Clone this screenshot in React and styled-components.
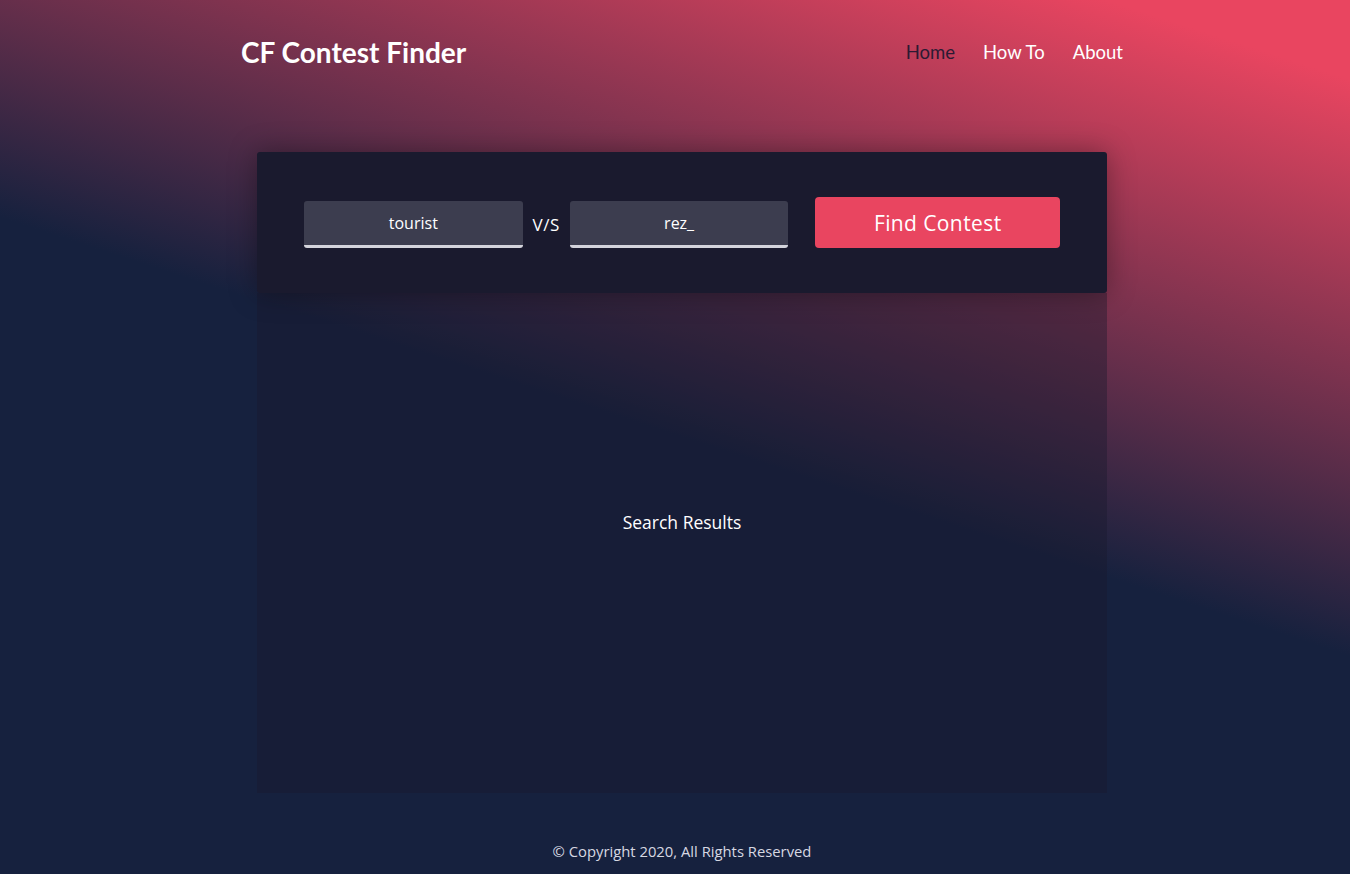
import React from 'react';
import styled, { createGlobalStyle } from 'styled-components';

const GlobalStyle = createGlobalStyle`
    html, body {
        margin: 0;
        padding: 0;
    }
    body {
        font-family: "Open Sans", "Liberation Sans", sans-serif;
        background: #16213e;
    }
`

const Page = styled.div`
    min-height: 874px;
    box-sizing: border-box;
    padding-left: 14px;
    display: flex;
    flex-direction: column;
    align-items: center;
    background: linear-gradient(18deg, #16213e 50%, #e94560 94%);
`

const Header = styled.header`
    width: 882px;
    height: 104px;
    display: flex;
    justify-content: space-between;
    align-items: center;
`

const Brand = styled.h1`
    margin: 0;
    font-family: Lato, "Open Sans", sans-serif;
    font-size: 28px;
    font-weight: 700;
    color: #fff;
`

const Nav = styled.nav`
    display: flex;
    gap: 28px;
`

const NavLink = styled.a`
    font-family: Lato, "Open Sans", sans-serif;
    font-size: 18.5px;
    color: ${p => (p.$active ? '#2b1a33' : '#fff')};
    text-decoration: none;
    cursor: pointer;
`

const Card = styled.div`
    margin-top: 48px;
    width: 850px;
    height: 141px;
    box-sizing: border-box;
    padding: 0 47px;
    background: #1a1a2e;
    border-radius: 3px;
    box-shadow: 0 0 28px rgba(0, 0, 0, 0.35);
    display: flex;
    align-items: center;
    position: relative;
    z-index: 1;
`

const Input = styled.input`
    width: 219px;
    height: 47px;
    box-sizing: border-box;
    border: none;
    border-bottom: 3px solid #d4d4dc;
    border-radius: 3px;
    background: #3c3d4f;
    color: #fff;
    text-align: center;
    font-family: "Open Sans", sans-serif;
    font-size: 16px;
    outline: none;
    margin-top: 4px;
`

const Vs = styled.span`
    color: #fff;
    font-size: 17px;
    letter-spacing: 0.5px;
    margin: 4px 10px 0 10px;
`

const FindButton = styled.button`
    margin-left: 27px;
    width: 245px;
    height: 51px;
    border: none;
    border-radius: 4px;
    background: #e94560;
    color: #fff;
    font-family: "Open Sans", sans-serif;
    font-size: 21px;
    letter-spacing: 0.4px;
    cursor: pointer;
`

const Results = styled.div`
    width: 850px;
    height: 500px;
    box-sizing: border-box;
    padding-bottom: 42px;
    background: rgba(26, 26, 46, 0.4);
    display: flex;
    align-items: center;
    justify-content: center;
    color: #fff;
    font-size: 17.5px;
`

const Footer = styled.footer`
    height: 81px;
    display: flex;
    align-items: center;
    justify-content: center;
    color: #d6d8e2;
    font-size: 14.8px;
    padding-top: 34px;
    box-sizing: border-box;
`

const App = () => {
    return (
        <Page>
            <GlobalStyle />
            <Header>
                <Brand>CF Contest Finder</Brand>
                <Nav>
                    <NavLink $active>Home</NavLink>
                    <NavLink>How To</NavLink>
                    <NavLink>About</NavLink>
                </Nav>
            </Header>
            <Card>
                <Input defaultValue="tourist" />
                <Vs>V/S</Vs>
                <Input defaultValue="rez_" />
                <FindButton>Find Contest</FindButton>
            </Card>
            <Results>Search Results</Results>
            <Footer>© Copyright 2020, All Rights Reserved</Footer>
        </Page>
    );
}

export default App;
